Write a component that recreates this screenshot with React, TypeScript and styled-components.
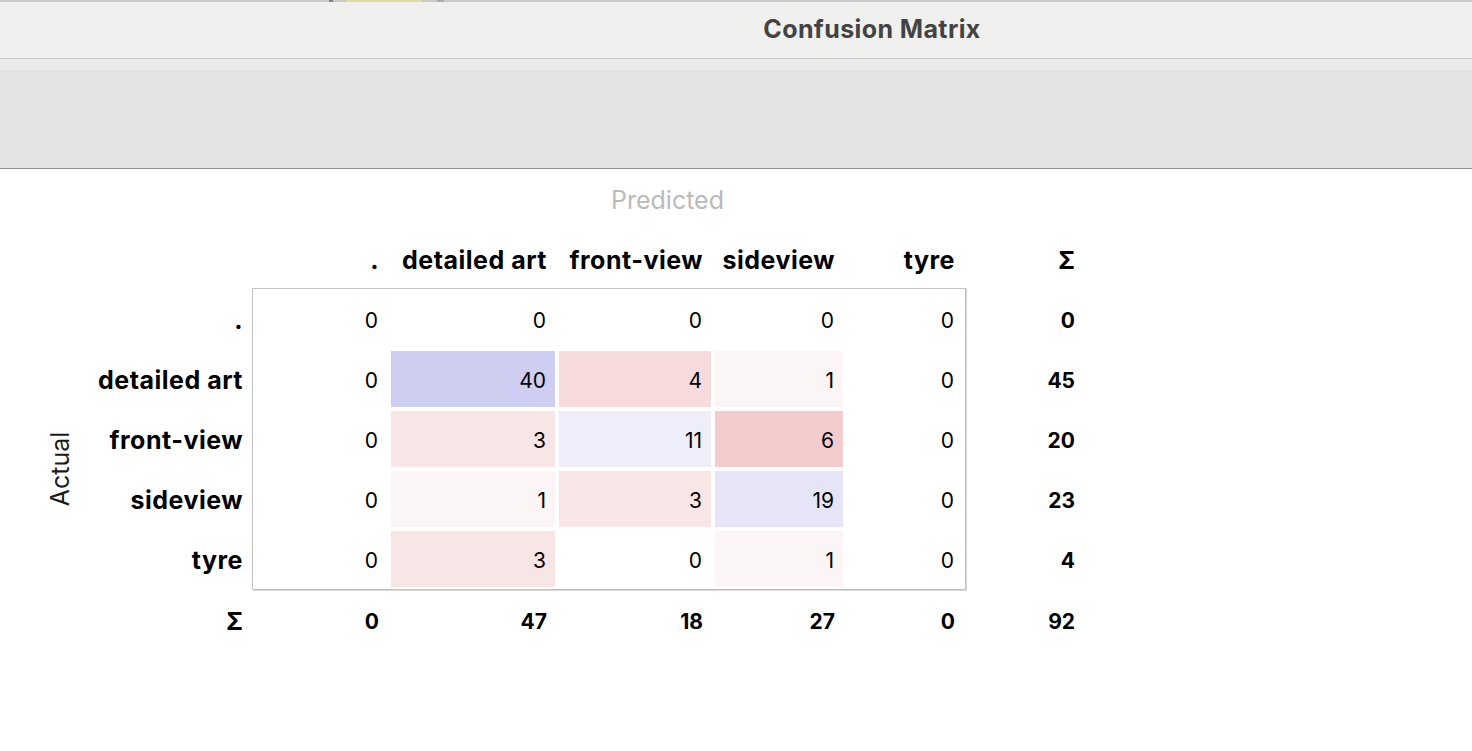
import React from "react";
import styled, { createGlobalStyle } from "styled-components";

const GlobalStyle = createGlobalStyle`
  html, body { margin: 0; padding: 0; background: #ffffff; }
  body { font-family: Inter, "Noto Sans", "Liberation Sans", sans-serif; color: #000; }
`;

const Page = styled.div`
  width: 1472px;
  height: 751px;
  overflow: hidden;
  display: flex;
  flex-direction: column;
`;

const TopStrip = styled.div`
  height: 2px;
  background: #cacaca;
  display: flex;
  padding-left: 329px;
`;

const StripBit = styled.div<{ $w: number; $c: string; $ml: number }>`
  width: ${(p) => p.$w}px;
  margin-left: ${(p) => p.$ml}px;
  background: ${(p) => p.$c};
`;

const TitleBar = styled.div`
  height: 57px;
  background: #f0f0ee;
  border-bottom: 1px solid #c6c6c6;
  display: flex;
  align-items: center;
  justify-content: center;
  padding-left: 272px;
  padding-bottom: 3px;
  box-sizing: border-box;
`;

const Title = styled.div`
  font-weight: 700;
  font-size: 25px;
  color: #434343;
  letter-spacing: 0.4px;
`;

const ToolBand = styled.div`
  height: 110px;
  background: #e4e4e4;
  border-top: 11px solid #ebebeb;
  box-sizing: border-box;
  border-bottom: 1px solid #8e8e8e;
`;

const Content = styled.div`
  padding-left: 40px;
  padding-top: 1px;
`;

const Matrix = styled.div`
  display: grid;
  grid-template-columns: 40px 172px 714px 117px;
  grid-template-rows: 60px 58px 302px 60px;
`;

const PredictedLabel = styled.div`
  grid-column: 3 / 5;
  grid-row: 1;
  display: flex;
  align-items: center;
  justify-content: center;
  font-size: 25px;
  color: #bababa;
`;

const ActualCell = styled.div`
  grid-column: 1;
  grid-row: 3 / 5;
  display: flex;
  align-items: center;
  justify-content: center;
`;

const ActualLabel = styled.div`
  transform: rotate(-90deg);
  font-size: 25px;
  color: #1a1a1a;
  white-space: nowrap;
`;

const ColumnStrip = styled.div<{ $row: number }>`
  grid-column: 3;
  grid-row: ${(p) => p.$row};
  display: grid;
  grid-template-columns: 132px 164px 152px 128px 116px;
  column-gap: 4px;
  padding-left: 3px;
  align-items: center;
`;

const HeadText = styled.div<{ $size: number; $track: number }>`
  text-align: right;
  padding-right: 8px;
  padding-top: 2px;
  font-size: ${(p) => p.$size}px;
  letter-spacing: ${(p) => p.$track}px;
  font-weight: 700;
  white-space: nowrap;
`;

const SideStack = styled.div<{ $col: number }>`
  grid-column: ${(p) => p.$col};
  grid-row: 3;
  display: grid;
  grid-template-rows: repeat(5, 56px);
  row-gap: 4px;
  padding-top: 4px;
  align-items: center;
`;

const SideText = styled.div<{ $pad: number; $size: number; $track: number }>`
  text-align: right;
  padding-right: ${(p) => p.$pad}px;
  font-size: ${(p) => p.$size}px;
  letter-spacing: ${(p) => p.$track}px;
  font-weight: 700;
  white-space: nowrap;
`;

const CornerCell = styled.div<{ $col: number; $row: number; $pad: number; $size: number }>`
  grid-column: ${(p) => p.$col};
  grid-row: ${(p) => p.$row};
  display: flex;
  align-items: center;
  justify-content: flex-end;
  padding-right: ${(p) => p.$pad}px;
  padding-top: 3px;
  font-size: ${(p) => p.$size}px;
  font-weight: 700;
`;

const Box = styled.div`
  grid-column: 3;
  grid-row: 3;
  border: 1px solid #c2c2c2;
  box-shadow: 1px 1px 0 #d6d6d6;
  padding: 2px;
  display: grid;
  grid-template-columns: 132px 164px 152px 128px 116px;
  grid-template-rows: repeat(5, 56px);
  gap: 4px;
  box-sizing: border-box;
  height: 302px;
`;

const Cell = styled.div<{ $bg: string }>`
  background: ${(p) => p.$bg};
  display: flex;
  align-items: center;
  justify-content: flex-end;
  padding-right: 9px;
  padding-top: 2px;
  font-size: 21px;
  font-weight: 400;
`;

const classes = [".", "detailed art", "front-view", "sideview", "tyre"];

const values: number[][] = [
  [0, 0, 0, 0, 0],
  [0, 40, 4, 1, 0],
  [0, 3, 11, 6, 0],
  [0, 1, 3, 19, 0],
  [0, 3, 0, 1, 0],
];

const colors: string[][] = [
  ["#fff", "#fff", "#fff", "#fff", "#fff"],
  ["#fff", "#cecef2", "#f8dcdd", "#fcf5f5", "#fff"],
  ["#fff", "#f8e5e5", "#eeeefa", "#f3cccd", "#fff"],
  ["#fff", "#fcf5f5", "#f8e5e5", "#e5e5f7", "#fff"],
  ["#fff", "#f8e5e5", "#fff", "#fcf5f5", "#fff"],
];

const rowSums = [0, 45, 20, 23, 4];
const colSums = [0, 47, 18, 27, 0];

export default function App() {
  return (
    <Page>
      <GlobalStyle />
      <TopStrip>
        <StripBit $w={4} $c="#7b8189" $ml={0} />
        <StripBit $w={76} $c="#e0dba2" $ml={13} />
        <StripBit $w={7} $c="#a9adb2" $ml={15} />
      </TopStrip>
      <TitleBar>
        <Title>Confusion Matrix</Title>
      </TitleBar>
      <ToolBand />
      <Content>
        <Matrix>
          <PredictedLabel>Predicted</PredictedLabel>
          <ActualCell>
            <ActualLabel>Actual</ActualLabel>
          </ActualCell>
          <ColumnStrip $row={2}>
            {classes.map((c) => (
              <HeadText key={c} $size={25} $track={0.5}>{c}</HeadText>
            ))}
          </ColumnStrip>
          <CornerCell $col={4} $row={2} $pad={8} $size={24}>Σ</CornerCell>
          <SideStack $col={2}>
            {classes.map((c) => (
              <SideText key={c} $pad={9} $size={25} $track={0.5}>{c}</SideText>
            ))}
          </SideStack>
          <Box>
            {values.map((row, r) =>
              row.map((v, c) => (
                <Cell key={`${r}-${c}`} $bg={colors[r][c]}>
                  {v}
                </Cell>
              ))
            )}
          </Box>
          <SideStack $col={4}>
            {rowSums.map((s, i) => (
              <SideText key={i} $pad={8} $size={21} $track={0}>{s}</SideText>
            ))}
          </SideStack>
          <CornerCell $col={2} $row={4} $pad={9} $size={24}>Σ</CornerCell>
          <ColumnStrip $row={4}>
            {colSums.map((s, i) => (
              <HeadText key={i} $size={21} $track={0}>{s}</HeadText>
            ))}
          </ColumnStrip>
          <CornerCell $col={4} $row={4} $pad={8} $size={21}>92</CornerCell>
        </Matrix>
      </Content>
    </Page>
  );
}
